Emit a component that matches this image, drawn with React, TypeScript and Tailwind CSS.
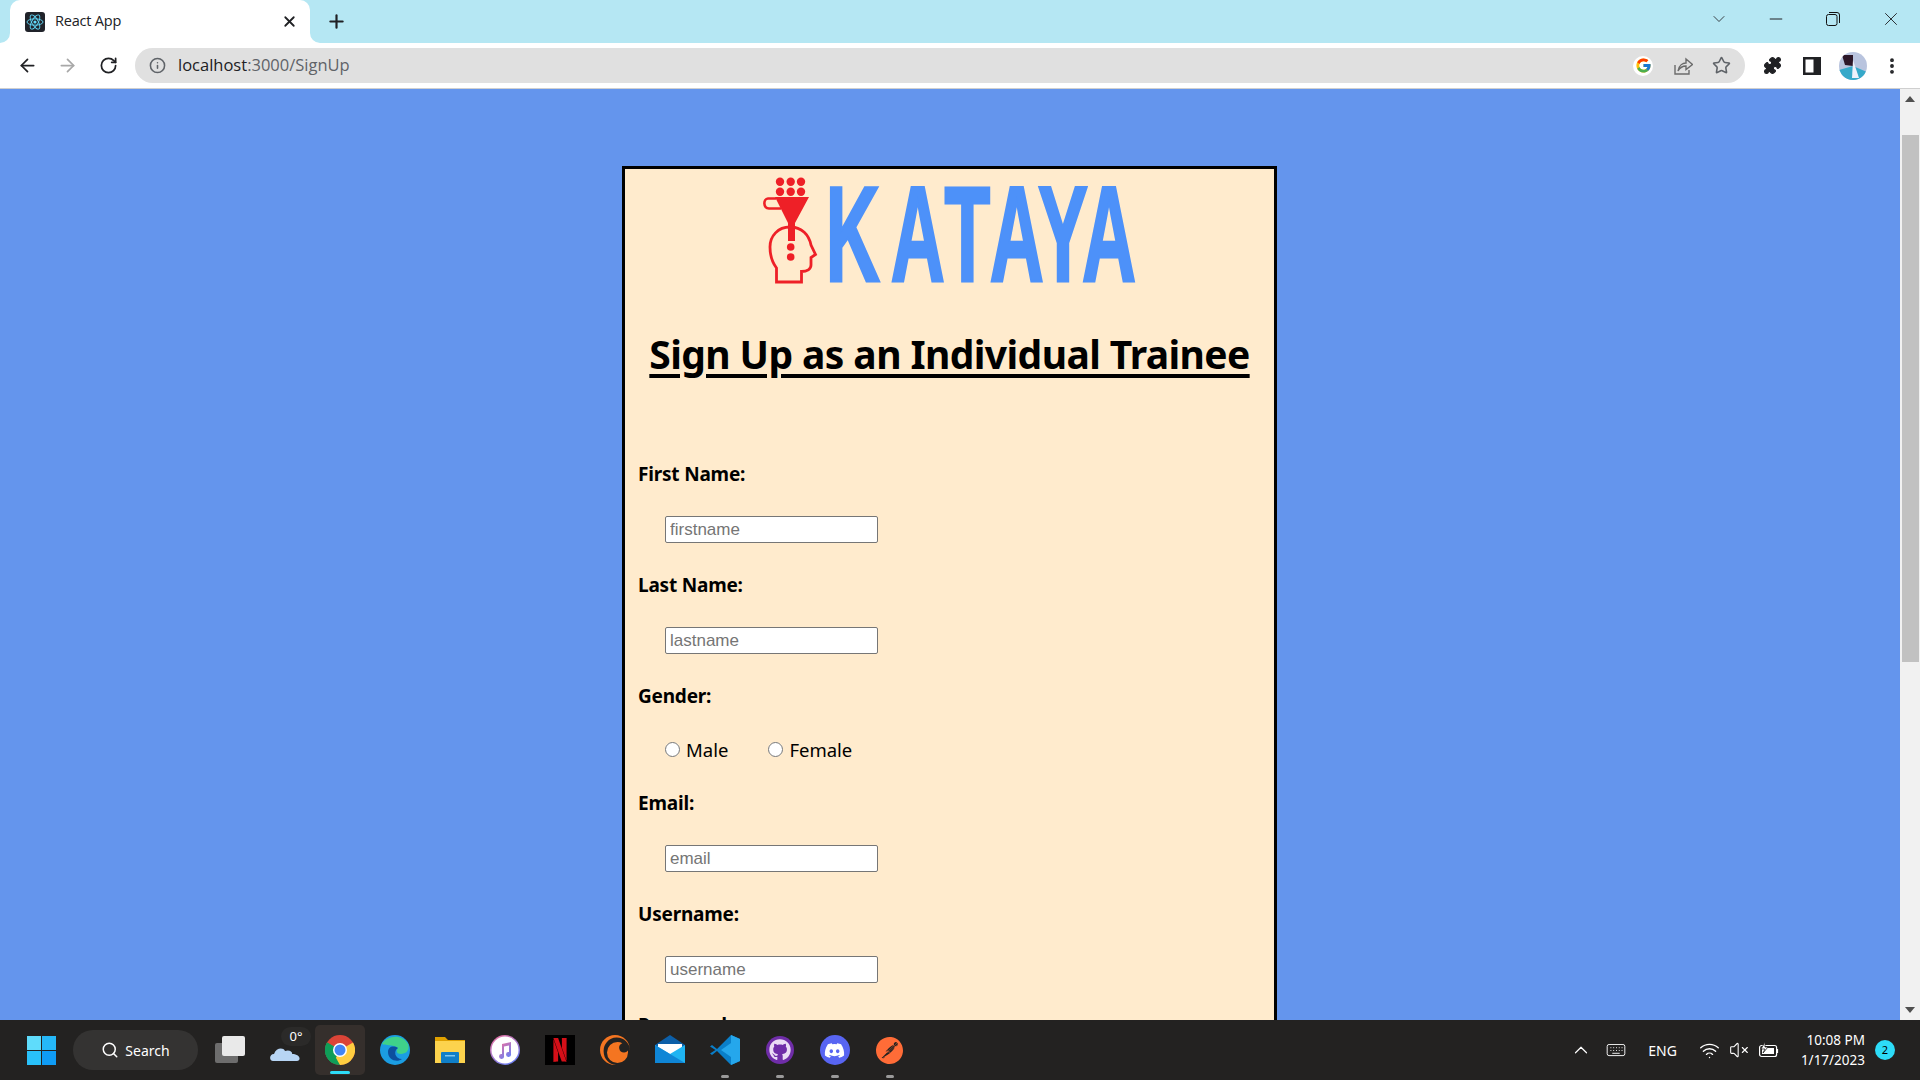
import { ArrowLeft, ArrowRight, ChevronDown, ChevronUp, Info, Minus, MoreVertical, Plus, Puzzle, RotateCw, Search, Star, VolumeX, Wifi, X } from "lucide-react";
import { FaDiscord, FaGithub } from "react-icons/fa";
import { FcGoogle } from "react-icons/fc";
import { SiCrunchyroll, SiNetflix, SiPostman } from "react-icons/si";

const ReactLogo = () => (
  <svg viewBox="0 0 20 20" className="h-5 w-5 rounded-[3px] bg-[#20232a]">
    <circle cx="10" cy="10" r="1.6" fill="#61dafb" />
    <g fill="none" stroke="#61dafb" strokeWidth="0.9">
      <ellipse cx="10" cy="10" rx="8" ry="3.2" />
      <ellipse cx="10" cy="10" rx="8" ry="3.2" transform="rotate(60 10 10)" />
      <ellipse cx="10" cy="10" rx="8" ry="3.2" transform="rotate(120 10 10)" />
    </g>
  </svg>
);

const Logo = () => (
  <svg viewBox="0 5 420 120" className="mx-auto mt-px block h-[120px] w-[420px]">
    <g fill="#ee2027">
      <circle cx="40" cy="16.7" r="4.2" />
      <circle cx="50.7" cy="16.7" r="4.2" />
      <circle cx="61" cy="16.7" r="4.2" />
      <circle cx="40" cy="26.7" r="4.2" />
      <circle cx="50.7" cy="26.7" r="4.2" />
      <circle cx="61" cy="26.7" r="4.2" />
      <polygon points="35,32 69,32 55,58 55,76 48,76 48,58" />
      <circle cx="50.7" cy="82" r="3.8" />
      <circle cx="50.7" cy="92" r="3.8" />
    </g>
    <path d="M36 33.500 H28 C23 34 23 43 29 43.500 H41" fill="none" stroke="#ee2027" strokeWidth="2.6" />
    <path
      d="M36.500 117 V103 C32 97 30 90 30 82 C30 71 38 62 50 62 C62 62 69 70 71 80 L75.500 89.500 L71 92.500 L71 100 C71 104 67 106.500 61.500 106.500 V117 Z"
      fill="none"
      stroke="#ee2027"
      strokeWidth="2.8"
    />
    <text
      transform="scale(0.55 1)"
      x="156 274 372 454 542 622"
      y="116"
      fill="#4d91f9"
      stroke="#4d91f9"
      strokeWidth="3"
      fontFamily="Liberation Sans"
      fontWeight="700"
      fontSize="136"
    >
      KATAYA
    </text>
  </svg>
);

const Chrome = () => (
  <svg viewBox="0 0 30 30" className="h-[30px] w-[30px]">
    <circle cx="15" cy="15" r="15" fill="#db4437" />
    <path d="M15 15 L2 7.500 A15 15 0 0 0 15 30 L22 15 Z" fill="#0f9d58" />
    <path d="M15 15 L28 7.500 A15 15 0 0 1 15 30 L8.500 18.500 Z" fill="#ffcd40" />
    <path d="M15 15 L2 7.500 A15 15 0 0 0 8 28.300 L15 15 Z" fill="#0f9d58" />
    <circle cx="15" cy="15" r="7" fill="#fff" />
    <circle cx="15" cy="15" r="5.500" fill="#4285f4" />
  </svg>
);

const Edge = () => (
  <svg viewBox="0 0 30 30" className="h-[30px] w-[30px]">
    <circle cx="15" cy="15" r="15" fill="#1b9de2" />
    <path d="M2 9 C6 1 22 -2 28 9 C30 14 27 19 21 19 C16 19 16 15 18 13 C13 9 5 11 2 9 Z" fill="#3fd18a" />
    <path d="M8 17 C8 12 13 10 18 13 C13 16 15 24 22 24 C17 28 8 25 8 17 Z" fill="#0c4f9e" />
  </svg>
);

const Files = () => (
  <svg viewBox="0 0 30 30" className="h-[30px] w-[30px]">
    <path d="M0 2 H10 L13 5 H30 V28 H0 Z" fill="#e0a100" />
    <rect x="0" y="6" width="30" height="22" fill="#fcd34d" />
    <rect x="6" y="17" width="18" height="11" rx="1" fill="#0f7fc8" />
    <rect x="10" y="20" width="10" height="1.500" fill="#7cc7f0" />
  </svg>
);

const Itunes = () => (
  <svg viewBox="0 0 30 30" className="h-[30px] w-[30px]">
    <defs>
      <linearGradient id="itunes" x1="0" y1="0" x2="0.6" y2="1">
        <stop offset="0" stopColor="#f2709c" />
        <stop offset="1" stopColor="#6f7ff0" />
      </linearGradient>
    </defs>
    <circle cx="15" cy="15" r="15" fill="url(#itunes)" />
    <circle cx="15" cy="15" r="13.500" fill="#fff" />
    <path d="M12 9 L21 7 V19 A2.500 2.500 0 1 1 19 17 V10.500 L14 11.500 V21 A2.500 2.500 0 1 1 12 19 Z" fill="url(#itunes)" />
  </svg>
);

const Mail = () => (
  <svg viewBox="0 0 30 30" className="h-[30px] w-[30px]">
    <path d="M0 10 L15 0 L30 10 V14 H0 Z" fill="#0c5fa8" />
    <path d="M3 9 H27 V19 L15 24 L3 19 Z" fill="#fff" />
    <path d="M0 10 L15 19 L30 10 V28 H0 Z" fill="#1fb4f2" />
    <path d="M0 28 V10 L30 28 Z" fill="#0f86d6" />
  </svg>
);

const VsCode = () => (
  <svg viewBox="0 0 30 30" className="h-[30px] w-[30px]">
    <path d="M21 0 L30 4 V26 L21 30 L7 16 L2 20 L0 18.500 L5.500 15 L0 11.500 L2 10 L7 14 Z" fill="#0a7fc9" />
    <path d="M21 0 L30 4 V26 L21 30 Z M21 8 L11 15 L21 22 Z" fill="#25a7ec" fillRule="evenodd" />
  </svg>
);

const Tile = ({ active, running, children }: { active?: boolean; running?: boolean; children: React.ReactNode }) => (
  <div
    className={
      active
        ? "relative flex h-[50px] w-[50px] mx-[2.500px] items-center justify-center rounded-[5px] bg-[#352f2c]"
        : "relative flex h-[50px] w-[55px] items-center justify-center"
    }
  >
    {children}
    {active && <span className="absolute bottom-[1px] h-[3px] w-5 rounded-full bg-[#2ddcf8]" />}
    {running && <span className="absolute bottom-[-3px] h-[3px] w-2 rounded-full bg-[#9a9a9a]" />}
  </div>
);

const TextField = ({ placeholder }: { placeholder: string }) => (
  <div className="mb-[29px] pl-[27px]">
    <input
      placeholder={placeholder}
      className="block h-[27px] w-[213px] rounded-[2px] border border-[#767676] bg-white px-[4px] font-['Liberation_Sans',sans-serif] text-[17px] placeholder:text-[#757575]"
    />
  </div>
);

const FieldLabel = ({ children }: { children: React.ReactNode }) => (
  <label className="mb-7 block h-[27px] text-[19px] leading-[27px] font-bold tracking-[-0.2px] text-black">{children}</label>
);

export default function App() {
  return (
    <div className="flex h-screen flex-col overflow-hidden font-['Open_Sans',sans-serif]">
      {/* tab strip */}
      <div className="flex h-[43px] shrink-0 items-end bg-[#b5e7f3] pl-[10px] text-[#202124]">
        <div className="relative flex h-[43px] w-[300px] items-center rounded-t-[10px] bg-white pr-[12px] pl-[15px]">
          <svg viewBox="0 0 10 10" className="absolute bottom-0 left-[-10px] h-[10px] w-[10px]">
            <path d="M10 0 V10 H0 A10 10 0 0 0 10 0 Z" fill="#fff" />
          </svg>
          <svg viewBox="0 0 10 10" className="absolute right-[-10px] bottom-0 h-[10px] w-[10px]">
            <path d="M0 0 V10 H10 A10 10 0 0 1 0 0 Z" fill="#fff" />
          </svg>
          <ReactLogo />
          <span className="mb-[2px] ml-[10px] flex-1 text-[14.500px] tracking-[-0.2px]">React App</span>
          <X size={17} strokeWidth={2.500} />
        </div>
        <div className="mb-[11px] ml-[16px]">
          <Plus size={21} strokeWidth={2.500} />
        </div>
        <div className="mb-[11px] flex flex-1 items-center justify-end self-stretch pt-[10px]">
          <ChevronDown size={20} strokeWidth={1} className="mr-[37px] mb-1" />
          <Minus size={20} strokeWidth={1.200} className="mr-[40px] mb-1" />
          <svg viewBox="0 0 14 14" className="mr-[40px] mb-1 h-[14px] w-[14px]" fill="none" stroke="#111" strokeWidth="1">
            <rect x="0.500" y="2.500" width="10.500" height="11" rx="2" />
            <path d="M3 0.500 H11 A2.500 2.500 0 0 1 13.500 3 V11" />
          </svg>
          <X size={22} strokeWidth={1} className="mr-[18px] mb-1" />
        </div>
      </div>

      {/* toolbar */}
      <div className="flex h-[46px] shrink-0 items-start border-b border-[#cfcfcf] bg-white pt-[5px] text-[#202124]">
        <div className="flex h-[35px] w-[135px] items-center pl-[17px]">
          <ArrowLeft size={21} strokeWidth={2} />
          <ArrowRight size={21} strokeWidth={2} className="ml-[19px] text-[#a8a8a8]" />
          <RotateCw size={19} strokeWidth={2.200} className="ml-[21px]" />
        </div>
        <div className="flex h-[35px] w-[1610px] items-center rounded-full bg-[#e0e0e0] pl-[14px]">
          <Info size={17} strokeWidth={2.200} className="text-[#5f6368]" />
          <span className="ml-[12px] flex-1 text-[16.500px]">
            localhost<span className="text-[#5f6368]">:3000/SignUp</span>
          </span>
          <div className="flex h-[20px] w-[20px] items-center justify-center rounded-full bg-white">
            <FcGoogle size={17} />
          </div>
          <svg viewBox="0 0 20 20" className="ml-[20px] h-[20px] w-[20px]" fill="none" stroke="#6b6b6b" strokeWidth="1.400">
            <path d="M2 9 V18 H16 V14" />
            <path d="M5 15 C6 9 10 7 13 7 V3 L19.500 8.500 L13 13.500 V10 C10 10 7 11.500 5 15 Z" />
          </svg>
          <Star size={19} strokeWidth={2} className="mr-[14px] ml-[19px] text-[#5f6368]" />
        </div>
        <div className="flex h-[35px] flex-1 items-center pl-[18px]">
          <Puzzle size={19} fill="#202124" strokeWidth={1.500} />
          <svg viewBox="0 0 18 18" className="ml-[21px] h-[18px] w-[18px]">
            <path d="M0 0 H18 V18 H0 Z M2.500 2.500 V15.500 H10.500 V2.500 Z" fill="#202124" fillRule="evenodd" />
          </svg>
          <svg viewBox="0 0 28 28" className="ml-[18px] h-7 w-7 rounded-full">
            <rect width="28" height="28" fill="#b9c4de" />
            <path d="M0 28 L0 18 L14 14 L28 20 V28 Z" fill="#36a9c9" />
            <path d="M3 3 H14 V14 L6 13 Z" fill="#2c1728" />
            <path d="M14 8 L20 26 L13 26 Z" fill="#eef1fa" />
          </svg>
          <MoreVertical size={20} strokeWidth={2.600} className="ml-[15px]" />
        </div>
      </div>

      {/* page */}
      <div className="flex min-h-0 flex-1">
        <main className="min-w-0 flex-1 overflow-hidden bg-[#6495ed] pt-[77px]">
          <div className="ml-[622px] w-[655px] border-[3px] border-black bg-[#ffebcd] px-[13px] pb-10 font-['Noto_Sans',sans-serif]">
            <Logo />
            <h1 className="mt-[37px] mb-[80px] text-center text-[39px] leading-[54px] font-bold tracking-[-0.6px] text-black underline decoration-[4px] underline-offset-[5px]">
              Sign Up as an Individual Trainee
            </h1>
            <FieldLabel>First Name:</FieldLabel>
            <TextField placeholder="firstname" />
            <FieldLabel>Last Name:</FieldLabel>
            <TextField placeholder="lastname" />
            <FieldLabel>Gender:</FieldLabel>
            <div className="mb-[26px] flex h-[26px] items-center pl-[27px] text-[18.500px] text-black">
              <input type="radio" name="gender" className="mb-[3px] h-[15px] w-[15px]" />
              <span className="mr-[40px] ml-[6px] mb-[2px]">Male</span>
              <input type="radio" name="gender" className="mb-[3px] h-[15px] w-[15px]" />
              <span className="ml-[6px] mb-[2px]">Female</span>
            </div>
            <FieldLabel>Email:</FieldLabel>
            <TextField placeholder="email" />
            <FieldLabel>Username:</FieldLabel>
            <TextField placeholder="username" />
            <FieldLabel>Password:</FieldLabel>
            <TextField placeholder="password" />
          </div>
        </main>
        <div className="flex w-5 shrink-0 flex-col items-center bg-[#f1f1f1]">
          <svg viewBox="0 0 10 6" className="mt-[7px] h-[6px] w-[10px]">
            <path d="M5 0 L10 6 H0 Z" fill="#505050" />
          </svg>
          <div className="mt-[33px] h-[527px] w-[17px] bg-[#c1c1c1]" />
          <div className="flex-1" />
          <svg viewBox="0 0 10 6" className="mb-[7px] h-[6px] w-[10px]">
            <path d="M0 0 H10 L5 6 Z" fill="#505050" />
          </svg>
        </div>
      </div>

      {/* taskbar */}
      <footer className="flex h-[60px] shrink-0 items-center bg-[#232221] pl-[27px] text-white">
        <svg viewBox="0 0 29 29" className="h-[29px] w-[29px]">
          <rect width="14" height="14" fill="#5fdcfb" />
          <rect x="15" width="14" height="14" fill="#25b8f8" />
          <rect y="15" width="14" height="14" fill="#29c1fa" />
          <rect x="15" y="15" width="14" height="14" fill="#0f9cf5" />
        </svg>
        <div className="ml-[17px] flex h-10 w-[125px] items-center justify-center rounded-full bg-[#343332] font-['Noto_Sans',sans-serif] text-[14px]">
          <Search size={18} strokeWidth={2} />
          <span className="ml-[6px]">Search</span>
        </div>
        <div className="ml-[4px] flex items-center">
          <Tile>
            <svg viewBox="0 0 30 30" className="h-[30px] w-[30px]">
              <rect x="0" y="8" width="23" height="20" rx="2" fill="#6d6d6d" />
              <rect x="7" y="1" width="23" height="20" rx="2" fill="#e9e9e9" />
            </svg>
          </Tile>
          <Tile>
            <svg viewBox="0 0 30 30" className="h-[30px] w-[30px]">
              <path d="M3 26 C-1 26 -1 19 4 19 C6 13 13 12 15 16 C20 14 23 18 22 19 C31 19 31 26 27 26 Z" fill="#b7d5f4" />
            </svg>
            <span className="absolute top-[2px] left-[24px] flex h-[19px] w-[30px] items-center justify-center rounded-full bg-[#2b2a29] font-['Noto_Sans',sans-serif] text-[13px]">
              0°
            </span>
          </Tile>
          <Tile active>
            <Chrome />
          </Tile>
          <Tile>
            <Edge />
          </Tile>
          <Tile>
            <Files />
          </Tile>
          <Tile>
            <Itunes />
          </Tile>
          <Tile>
            <div className="flex h-[30px] w-[30px] items-center justify-center bg-black">
              <SiNetflix size={24} color="#d50f18" />
            </div>
          </Tile>
          <Tile>
            <SiCrunchyroll size={30} color="#f47521" />
          </Tile>
          <Tile>
            <Mail />
          </Tile>
          <Tile running>
            <VsCode />
          </Tile>
          <Tile running>
            <div className="flex h-7 w-7 items-center justify-center rounded-full bg-[#6f2da8]">
              <FaGithub size={22} color="#eadcf5" />
            </div>
          </Tile>
          <Tile running>
            <div className="flex h-[30px] w-[30px] items-center justify-center rounded-full bg-[#5865f2]">
              <FaDiscord size={21} color="#fff" />
            </div>
          </Tile>
          <Tile running>
            <SiPostman size={27} color="#ff6c37" />
          </Tile>
        </div>
        <div className="flex flex-1 items-center justify-end pr-[25px] font-['Noto_Sans',sans-serif]">
          <ChevronUp size={22} strokeWidth={1.300} />
          <svg viewBox="0 0 20 14" className="ml-[14px] h-[13px] w-5" fill="none" stroke="#fff" strokeWidth="1">
            <rect x="0.500" y="0.500" width="19" height="12" rx="2" />
            <path d="M4 4 H5 M7 4 H8 M10 4 H11 M13 4 H14 M16 4 H17 M4 7 H5 M7 7 H8 M10 7 H11 M13 7 H14 M16 7 H17 M6 10 H14" />
          </svg>
          <span className="ml-[22px] text-[14px]">ENG</span>
          <Wifi size={21} strokeWidth={1.600} className="ml-[22px]" />
          <VolumeX size={20} strokeWidth={1.300} className="ml-[9px]" />
          <svg viewBox="0 0 20 16" className="ml-[10px] h-4 w-5" fill="none" stroke="#fff" strokeWidth="1.200">
            <rect x="0.600" y="3.500" width="17" height="11" rx="2" />
            <rect x="3" y="6" width="12" height="6" fill="#fff" stroke="none" />
            <path d="M18.500 7 V11" />
            <path d="M6 0 L2 7 H6 L4 11 L9 5 H6 Z" fill="#fff" stroke="#232221" strokeWidth="0.800" />
          </svg>
          <div className="ml-[22px] flex flex-col items-end text-[13.500px] leading-[20px]">
            <span>10:08 PM</span>
            <span>1/17/2023</span>
          </div>
          <span className="ml-[10px] flex h-5 w-5 items-center justify-center rounded-full bg-[#2ddcf8] text-[11px] text-black">
            2
          </span>
        </div>
      </footer>
    </div>
  );
}
